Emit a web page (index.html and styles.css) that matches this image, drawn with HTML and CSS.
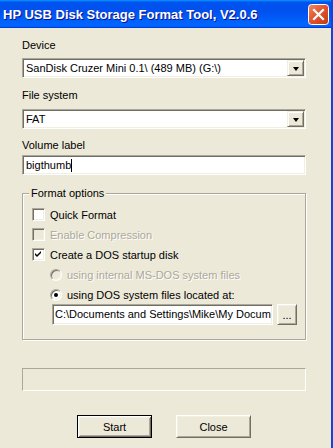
FILE: index.html
```html
<!DOCTYPE html>
<html lang="en">
<head>
  <meta charset="UTF-8">
  <meta name="viewport" content="width=device-width, initial-scale=1.0">
  <title>HP USB Disk Storage Format Tool</title>
  <link rel="stylesheet" href="styles.css">
</head>
<body>

  <div class="window">
    <div class="titlebar">
      <span class="title">HP USB Disk Storage Format Tool, V2.0.6</span>
      <span class="close-x">
        <svg width="21" height="21" viewBox="0 0 21 21">
          <defs>
            <linearGradient id="red" x1="0" y1="0" x2="1" y2="1">
              <stop offset="0" stop-color="#F08A66"/>
              <stop offset="0.5" stop-color="#E0522A"/>
              <stop offset="1" stop-color="#C23A14"/>
            </linearGradient>
          </defs>
          <rect x="0.5" y="0.5" width="20" height="20" rx="3" fill="url(#red)" stroke="#fff"/>
          <path d="M6 6 L15 15 M15 6 L6 15" stroke="#fff" stroke-width="2.2" stroke-linecap="square"/>
        </svg>
      </span>
    </div>

    <div class="client">
      <div class="label first">Device</div>
      <div class="combo">
        <span class="combo-text">SanDisk Cruzer Mini 0.1\ (489 MB) (G:\)</span>
        <span class="drop"><span class="arrow"></span></span>
      </div>

      <div class="label second">File system</div>
      <div class="combo">
        <span class="combo-text">FAT</span>
        <span class="drop"><span class="arrow"></span></span>
      </div>

      <div class="label third">Volume label</div>
      <div class="textbox">
        <span class="combo-text">bigthumb</span><span class="caret"></span>
      </div>

      <fieldset class="group">
        <legend>Format options</legend>
        <div class="rows">
          <div class="row">
            <span class="check"></span>
            <span>Quick Format</span>
          </div>
          <div class="row disabled">
            <span class="check off"></span>
            <span>Enable Compression</span>
          </div>
          <div class="row">
            <span class="check">
              <svg width="7" height="7" viewBox="0 0 7 7">
                <path d="M0 2 L2 4 L6 0 L6 2 L2 6 L0 4 Z" fill="#000"/>
              </svg>
            </span>
            <span>Create a DOS startup disk</span>
          </div>
          <div class="row sub disabled">
            <span class="radio off"></span>
            <span>using internal MS-DOS system files</span>
          </div>
          <div class="row sub">
            <span class="radio on"></span>
            <span>using DOS system files located at:</span>
          </div>
        </div>
        <div class="path-row">
          <div class="textbox path">
            <span class="path-text">C:\Documents and Settings\Mike\My Docum</span>
          </div>
          <button class="btn browse">...</button>
        </div>
      </fieldset>

      <div class="progress"></div>

      <div class="buttons">
        <button class="btn default">Start</button>
        <button class="btn">Close</button>
      </div>
    </div>
  </div>

</body>
</html>
```

FILE: styles.css
```css
body {
  margin: 0;
  padding: 0;
  background-color: #ECE9D8;
  font-family: "Liberation Sans", Arial, sans-serif;
  font-size: 11px;
  color: #000;
}

.window {
  width: 333px;
  height: 448px;
  box-sizing: border-box;
  border-right: 2px solid #1243DB;
  background-color: #ECE9D8;
  overflow: hidden;
}

.titlebar {
  height: 28px;
  display: flex;
  align-items: center;
  justify-content: space-between;
  padding: 0 2px 0 3px;
  background: linear-gradient(180deg, #0997ff, #0053ee 8%, #0050ee 40%, #0066ff 88%, #0066ff 93%, #005bff 95%, #003dd7 96%, #003dd7);
}

.title {
  color: #fff;
  font-weight: bold;
  font-size: 13px;
  text-shadow: 1px 1px #0F1089;
  padding-top: 1px;
}

.close-x {
  display: flex;
  margin-top: 1px;
}

.client {
  padding: 11px 25px 0 22px;
  display: flex;
  flex-direction: column;
}

.label {
  height: 13px;
  line-height: 13px;
}

.label.first { margin-bottom: 6px; }
.label.second { margin-top: 11px; margin-bottom: 7px; }
.label.third { margin-top: 10px; margin-bottom: 3px; }

/* sunken 3d field */
.combo,
.textbox {
  height: 20px;
  box-sizing: border-box;
  background-color: #fff;
  border: 1px solid;
  border-color: #ACA899 #fff #fff #ACA899;
  box-shadow: inset 1px 1px #716F64, inset -1px -1px #F1EFE2;
  display: flex;
  align-items: center;
  padding: 0 1px 0 3px;
  overflow: hidden;
  white-space: nowrap;
}

.combo {
  justify-content: space-between;
}

.combo-text {
  line-height: 13px;
}

.caret {
  width: 1px;
  height: 13px;
  background-color: #000;
}

.drop {
  width: 17px;
  height: 16px;
  box-sizing: border-box;
  background-color: #ECE9D8;
  border: 1px solid;
  border-color: #F1EFE2 #716F64 #716F64 #F1EFE2;
  box-shadow: inset 1px 1px #fff, inset -1px -1px #ACA899;
  display: flex;
  align-items: center;
  justify-content: center;
}

.arrow {
  width: 0;
  height: 0;
  border-left: 3.5px solid transparent;
  border-right: 3.5px solid transparent;
  border-top: 4px solid #000;
  margin-top: 1px;
}

.group {
  margin: 12px 0 0 0;
  padding: 0 0 14px 0;
  border: 1px solid #ACA899;
  box-shadow: inset 1px 1px #fff, 1px 1px #fff;
  min-width: 0;
}

.group legend {
  margin-left: 6px;
  padding: 0 2px;
  line-height: 13px;
  background-color: #ECE9D8;
}

.rows {
  margin-top: 5px;
  display: flex;
  flex-direction: column;
  gap: 1px;
}

.row {
  height: 19px;
  display: flex;
  align-items: center;
  gap: 5px;
  margin-left: 9px;
}

.row.sub {
  margin-left: 27px;
}

.row.disabled {
  color: #ACA899;
  text-shadow: 1px 1px #fff;
}

.check {
  width: 13px;
  height: 13px;
  box-sizing: border-box;
  background-color: #fff;
  border: 1px solid;
  border-color: #ACA899 #fff #fff #ACA899;
  box-shadow: inset 1px 1px #716F64, inset -1px -1px #F1EFE2;
  display: flex;
  align-items: center;
  justify-content: center;
}

.check.off {
  background-color: #ECE9D8;
}

.radio {
  width: 12px;
  height: 12px;
  box-sizing: border-box;
  border-radius: 50%;
  background-color: #fff;
  border: 1px solid;
  border-color: #ACA899 #fff #fff #ACA899;
  box-shadow: inset 1px 1px #716F64, inset -1px -1px #F1EFE2;
  display: flex;
  align-items: center;
  justify-content: center;
}

.radio.off {
  background-color: #ECE9D8;
}

.radio.on::after {
  content: "";
  width: 4px;
  height: 4px;
  border-radius: 50%;
  background-color: #000;
}

.path-row {
  display: flex;
  gap: 4px;
  margin-left: 29px;
  margin-top: 0;
}

.textbox.path {
  width: 221px;
  height: 21px;
  padding-left: 2px;
}

.path-text {
  line-height: 13px;
}

.btn {
  font-family: "Liberation Sans", Arial, sans-serif;
  font-size: 11px;
  color: #000;
  width: 75px;
  height: 23px;
  padding: 0;
  background-color: #ECE9D8;
  border: 1px solid;
  border-color: #fff #716F64 #716F64 #fff;
  box-shadow: inset 1px 1px #F1EFE2, inset -1px -1px #ACA899;
}

.btn.browse {
  width: 20px;
  height: 21px;
  line-height: 10px;
}

.btn.default {
  border-color: #000;
  box-shadow: inset 1px 1px #fff, inset -1px -1px #716F64, inset 2px 2px #F1EFE2, inset -2px -2px #ACA899;
}

.progress {
  margin-top: 28px;
  height: 23px;
  box-sizing: border-box;
  border: 1px solid;
  border-color: #ACA899 #fff #fff #ACA899;
}

.buttons {
  margin-top: 24px;
  display: flex;
  justify-content: center;
  gap: 24px;
}
```
